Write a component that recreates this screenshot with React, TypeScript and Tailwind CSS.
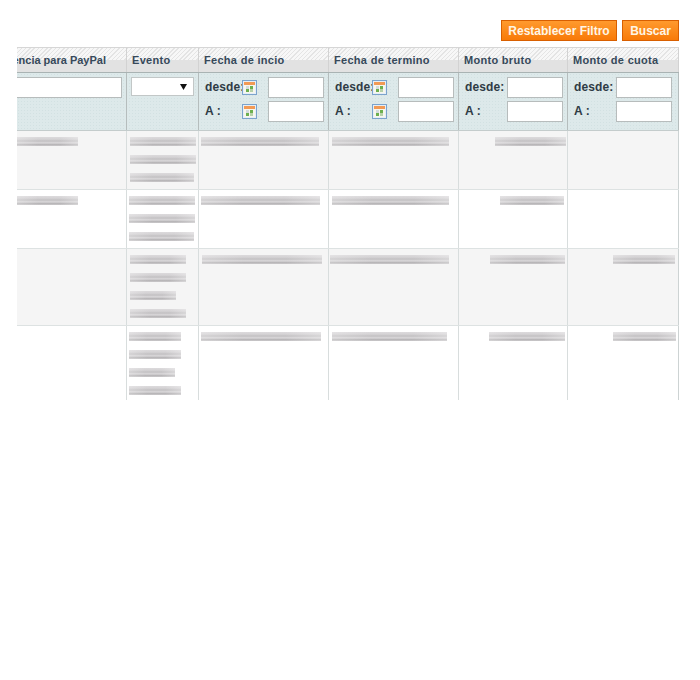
const FONT = "font-['Liberation_Sans',Arial,sans-serif]";
const BAR =
  "h-[9px] shrink-0 bg-[linear-gradient(90deg,rgba(255,255,255,0.25),rgba(255,255,255,0)_35%,rgba(255,255,255,0)_70%,rgba(255,255,255,0.3)),linear-gradient(180deg,#dcdadc_0%,#d4d2d4_25%,#c2c0c2_45%,#dad8da_65%,#b0aeb0_88%,#d6d4d6_100%)]";

const columns = "grid grid-cols-[110px_72px_130px_130px_109px_111px]";

const headers = [
  "Referencia para PayPal",
  "Evento",
  "Fecha de incio",
  "Fecha de termino",
  "Monto bruto",
  "Monto de cuota",
];

type Row = {
  height: string;
  bg: string;
  ref?: boolean;
  evento: number[];
  eventoLeft: string;
  fecha: string;
  fecha2: string;
  bruto: string;
  cuota?: string;
};

const rows: Row[] = [
  {
    height: "h-[59px]",
    bg: "bg-[#f5f5f5]",
    ref: true,
    evento: [66, 66, 64],
    eventoLeft: "pl-[3px]",
    fecha: "ml-[2px] w-[118px]",
    fecha2: "ml-[3px] w-[117px]",
    bruto: "w-[71px] mr-[1px]",
  },
  {
    height: "h-[59px]",
    bg: "bg-white",
    ref: true,
    evento: [66, 66, 65],
    eventoLeft: "pl-[2px]",
    fecha: "ml-[2px] w-[119px]",
    fecha2: "ml-[3px] w-[117px]",
    bruto: "w-[64px] mr-[3px]",
  },
  {
    height: "h-[77px]",
    bg: "bg-[#f5f5f5]",
    evento: [56, 56, 46, 56],
    eventoLeft: "pl-[3px]",
    fecha: "ml-[3px] w-[120px]",
    fecha2: "ml-[1px] w-[119px]",
    bruto: "w-[75px] mr-[2px]",
    cuota: "w-[62px] mr-[3px]",
  },
  {
    height: "h-[74px]",
    bg: "bg-white",
    evento: [52, 52, 46, 52],
    eventoLeft: "pl-[2px]",
    fecha: "ml-[2px] w-[120px]",
    fecha2: "ml-[3px] w-[115px]",
    bruto: "w-[76px] mr-[2px]",
    cuota: "w-[63px] mr-[2px]",
  },
];

function CalendarIcon() {
  return (
    <svg width="15" height="15" viewBox="0 0 15 15" className="mt-[-1px] shrink-0">
      <rect x="0.5" y="0.5" width="14" height="14" fill="#e6eef6" stroke="#7ba3cc" />
      <rect x="2" y="2" width="11" height="3" fill="#f29a55" />
      <rect x="2" y="5" width="11" height="8" fill="#f7f6ee" />
      <rect x="8" y="6" width="3" height="3" fill="#6db04f" />
      <rect x="4" y="9" width="3" height="3" fill="#6db04f" />
      <rect x="8" y="9" width="3" height="3" fill="#b7d2a8" />
      <rect x="4" y="6" width="3" height="3" fill="#d3dadd" />
    </svg>
  );
}

function TextBox({ className = "w-[56px]" }: { className?: string }) {
  return <div className={`h-[21px] shrink-0 bg-white border border-[#b7bcbc] ${className}`} />;
}

function DateFilter() {
  return (
    <div className="flex flex-col gap-[3px] pt-[4px] pl-[6px]">
      <div className="flex h-[21px] items-center">
        <span className="w-[37px] pb-[2px]">desde:</span>
        <CalendarIcon />
        <TextBox className="w-[56px] ml-[11px]" />
      </div>
      <div className="flex h-[21px] items-center">
        <span className="w-[37px] pb-[2px]">A :</span>
        <CalendarIcon />
        <TextBox className="w-[56px] ml-[11px]" />
      </div>
    </div>
  );
}

function AmountFilter() {
  return (
    <div className="flex flex-col gap-[3px] pt-[4px] pl-[6px]">
      <div className="flex h-[21px] items-center">
        <span className="w-[42px] pb-[2px]">desde:</span>
        <TextBox />
      </div>
      <div className="flex h-[21px] items-center">
        <span className="w-[42px] pb-[2px]">A :</span>
        <TextBox />
      </div>
    </div>
  );
}

const filterCell =
  "h-[57px] border-r border-[#b5bdbd] text-[12px] font-bold tracking-[0.1px] text-[#2f3b45] whitespace-nowrap";

export default function App() {
  return (
    <div className={`min-h-[680px] bg-white pl-[17px] pr-[21px] ${FONT}`}>
      <div className="flex justify-end gap-[5px] pt-[20px] pb-[6px]">
        <button className="h-[21px] w-[116px] border border-[#d85f00] bg-[linear-gradient(180deg,#ff9a2e,#f87a08)] text-[12px] font-bold text-[#fff6e6]">
          Restablecer Filtro
        </button>
        <button className="h-[21px] w-[57px] border border-[#d85f00] bg-[linear-gradient(180deg,#ff9a2e,#f87a08)] text-[12px] font-bold text-[#fff6e6]">
          Buscar
        </button>
      </div>

      <div className="border-t border-[#d6d6d6]">
        <div className={`${columns} border-b border-[#a9b3b3]`}>
          {headers.map((label, i) => (
            <div
              key={label}
              className={`flex h-[24px] items-center overflow-hidden whitespace-nowrap border-r border-[#d2d2d2] bg-[linear-gradient(180deg,transparent_50%,#e2e2e2_50%),repeating-linear-gradient(135deg,#e4e4e4_0px,#e4e4e4_1px,#f7f7f7_1px,#f7f7f7_3px)] text-[11px] font-bold text-[#36495a] ${
                i === 0 ? "justify-end pr-[20px] tracking-normal" : "pl-[5px] tracking-[0.3px]"
              }`}
            >
              {label}
            </div>
          ))}
        </div>

        <div
          className={`${columns} border-b border-[#c4cccc] bg-[#dde9ea] bg-[radial-gradient(#d2e1e2_1px,transparent_1px)] bg-[length:3px_3px]`}
        >
          <div className={`${filterCell} overflow-hidden pt-[4px] pr-[4px]`}>
            <TextBox className="-ml-[2px] w-[107px]" />
          </div>
          <div className={`${filterCell} pt-[4px] pl-[4px]`}>
            <div className="flex h-[19px] w-[63px] items-center justify-end border border-[#c2c7c7] bg-white pr-[6px]">
              <svg width="7" height="6" viewBox="0 0 7 6">
                <path d="M0 0h7L3.5 6z" fill="#111" />
              </svg>
            </div>
          </div>
          <div className={filterCell}>
            <DateFilter />
          </div>
          <div className={filterCell}>
            <DateFilter />
          </div>
          <div className={filterCell}>
            <AmountFilter />
          </div>
          <div className={filterCell}>
            <AmountFilter />
          </div>
        </div>

        {rows.map((row, i) => (
          <div
            key={i}
            className={`${columns} ${row.height} ${row.bg} overflow-hidden ${
              i < rows.length - 1 ? "border-b border-[#dde2e2]" : ""
            }`}
          >
            <div className="border-r border-[#d8dddd] pt-[6px]">
              {row.ref && <div className={`${BAR} w-[61px]`} />}
            </div>
            <div className={`flex flex-col gap-[9px] border-r border-[#d8dddd] pt-[6px] ${row.eventoLeft}`}>
              {row.evento.map((w, j) => (
                <div key={j} className={BAR} style={{ width: w }} />
              ))}
            </div>
            <div className="border-r border-[#d8dddd] pt-[6px]">
              <div className={`${BAR} ${row.fecha}`} />
            </div>
            <div className="border-r border-[#d8dddd] pt-[6px]">
              <div className={`${BAR} ${row.fecha2}`} />
            </div>
            <div className="flex justify-end border-r border-[#d8dddd] pt-[6px]">
              <div className={`${BAR} ${row.bruto}`} />
            </div>
            <div className="flex justify-end border-r border-[#cdd3d3] pt-[6px]">
              {row.cuota && <div className={`${BAR} ${row.cuota}`} />}
            </div>
          </div>
        ))}
      </div>
    </div>
  );
}
